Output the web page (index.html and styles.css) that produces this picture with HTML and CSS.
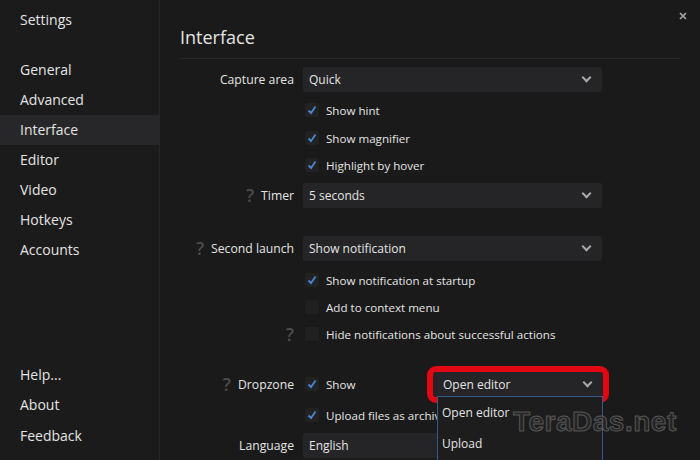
FILE: index.html
```html
<!DOCTYPE html>
<html lang="en">
<head>
  <meta charset="UTF-8">
  <title>Settings</title>
  <link rel="stylesheet" href="styles.css">
</head>
<body>
  <aside class="sidebar">
    <div class="sidebar-title">Settings</div>
    <nav class="nav">
      <a>General</a>
      <a>Advanced</a>
      <a class="active">Interface</a>
      <a>Editor</a>
      <a>Video</a>
      <a>Hotkeys</a>
      <a>Accounts</a>
    </nav>
    <nav class="nav nav-bottom">
      <a>Help...</a>
      <a>About</a>
      <a>Feedback</a>
    </nav>
  </aside>

  <main class="main">
    <button class="close" aria-label="Close">
      <svg width="8" height="8" viewBox="0 0 8 8"><path d="M1 1L7 7M7 1L1 7" stroke="#a9a9a9" stroke-width="1.6"/></svg>
    </button>
    <h1 class="title">Interface</h1>

    <div class="form">
      <label class="label">Capture area</label>
      <div class="select"><span>Quick</span><i class="chev"></i></div>

      <span></span>
      <div class="check on">Show hint</div>
      <span></span>
      <div class="check on">Show magnifier</div>
      <span></span>
      <div class="check on">Highlight by hover</div>

      <label class="label"><b class="help">?</b>Timer</label>
      <div class="select"><span>5 seconds</span><i class="chev"></i></div>

      <span class="spacer"></span><span class="spacer"></span>

      <label class="label"><b class="help">?</b>Second launch</label>
      <div class="select"><span>Show notification</span><i class="chev"></i></div>

      <span></span>
      <div class="check on">Show notification at startup</div>
      <span></span>
      <div class="check">Add to context menu</div>
      <label class="label"><b class="help">?</b></label>
      <div class="check">Hide notifications about successful actions</div>

      <span class="spacer"></span><span class="spacer"></span>

      <label class="label"><b class="help">?</b>Dropzone</label>
      <div class="cell">
        <div class="check on">Show</div>
        <div class="select select-small highlight">
          <span>Open editor</span><i class="chev"></i>
          <ul class="dropdown">
            <li>Open editor</li>
            <li>Upload</li>
          </ul>
        </div>
      </div>

      <span></span>
      <div class="check on">Upload files as archive</div>

      <label class="label">Language</label>
      <div class="select"><span>English</span><i class="chev"></i></div>
    </div>

    <div class="watermark">TeraDas.net</div>
  </main>
</body>
</html>
```

FILE: styles.css
```css
body {
  margin: 0;
  height: 460px;
  display: flex;
  background: #1a1a1a;
  color: #e4e4e4;
  font-family: "Open Sans", "Noto Sans", sans-serif;
  overflow: hidden;
}
.sidebar {
  width: 159px;
  border-right: 1px solid #262626;
  background: #1b1b1b;
  display: flex;
  flex-direction: column;
}
.sidebar-title {
  font-size: 14px;
  line-height: 20px;
  padding: 10px 20px 0;
}
.nav {
  display: flex;
  flex-direction: column;
  margin-top: 25px;
}
.nav a {
  font-size: 14px;
  line-height: 30px;
  padding: 0 20px;
}
.nav a.active {
  background: #272729;
}
.nav-bottom {
  margin-top: auto;
  padding-bottom: 9px;
}
.nav-bottom a {
  line-height: 30.5px;
}
.main {
  flex: 1;
  position: relative;
  padding: 0 20px;
}
.close {
  position: absolute;
  top: 8px;
  right: 13px;
  border: 0;
  padding: 0;
  background: none;
}
.title {
  margin: 0;
  padding: 25px 0 9px;
  font-size: 18px;
  line-height: 24px;
  font-weight: 400;
  border-bottom: 1px solid #292929;
}
.form {
  display: grid;
  grid-template-columns: 114px 299px;
  grid-template-rows: 30px 32px 24px 30px 30px 23px 30px 34px 20px 34px 18px 30px 32px 28px;
  column-gap: 9px;
  align-items: center;
  margin-top: 5px;
  font-size: 11.6px;
}
.label {
  display: flex;
  justify-content: flex-end;
  align-items: center;
  gap: 7px;
  font-size: 12.2px;
}
.help {
  color: #4b4b4b;
  font-size: 18px;
  font-weight: 600;
  line-height: 18px;
}
.select {
  position: relative;
  height: 25px;
  display: flex;
  align-items: center;
  justify-content: space-between;
  padding: 0 12px 0 6px;
  background: #252527;
  border-radius: 2px;
  font-size: 12px;
}
.chev {
  width: 5px;
  height: 5px;
  border-right: 2px solid #a8a8a8;
  border-bottom: 2px solid #a8a8a8;
  transform: translateY(-2px) rotate(45deg);
}
.check {
  display: flex;
  align-items: center;
  gap: 7px;
  padding-left: 2px;
}
.check::before {
  content: "";
  width: 14px;
  height: 14px;
  background: #202020;
  border-radius: 2px;
}
.check.on::before {
  background: #222 url("data:image/svg+xml,%3Csvg xmlns='http://www.w3.org/2000/svg' width='14' height='14'%3E%3Cpath d='M3.5 7.5L6 10L10.5 3.5' fill='none' stroke='%234a87d0' stroke-width='1.8'/%3E%3C/svg%3E") no-repeat center;
}
.cell {
  display: flex;
  align-items: center;
  justify-content: space-between;
}
.select-small {
  width: 148px;
  margin-right: -1px;
  padding-left: 10px;
}
.highlight {
  outline: 6px solid #e30613;
  border-radius: 3px;
  z-index: 2;
}
.dropdown {
  position: absolute;
  top: 24px;
  left: 4px;
  right: 0;
  height: 70px;
  margin: 0;
  padding: 0;
  list-style: none;
  background: #1d1d1d;
  border: 1px solid #34598c;
  border-bottom: 0;
}
.dropdown li {
  line-height: 31px;
  padding-left: 4px;
}
.watermark {
  position: absolute;
  left: 353px;
  top: 406px;
  font-family: "Liberation Sans", sans-serif;
  font-weight: 700;
  font-size: 28px;
  letter-spacing: 0.5px;
  color: rgba(45, 45, 45, 0.6);
  -webkit-text-stroke: 1px rgba(110, 110, 110, 0.7);
  z-index: 3;
}
```
